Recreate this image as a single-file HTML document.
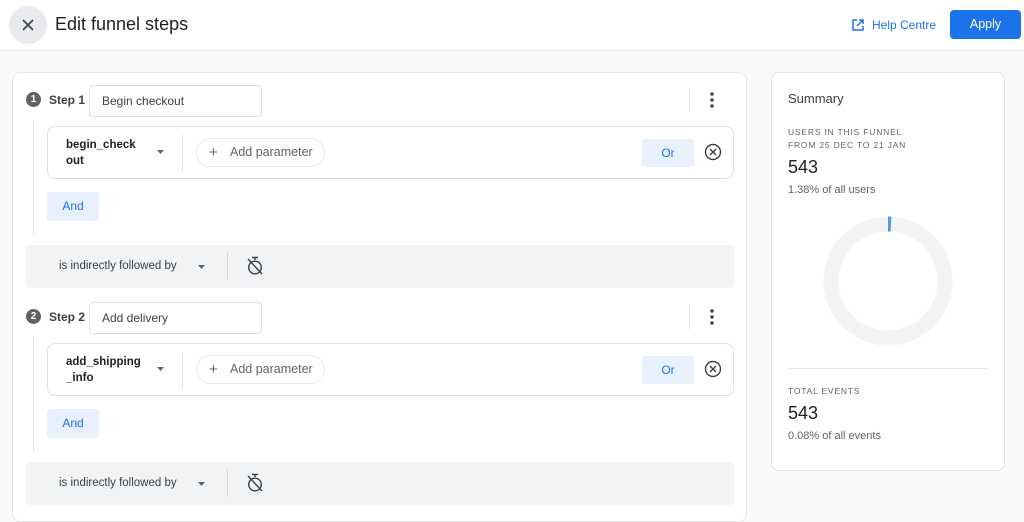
<!DOCTYPE html>
<html><head><meta charset="utf-8"><style>
*{box-sizing:border-box;margin:0;padding:0}
body{width:1024px;height:509px;overflow:hidden;background:#f8f9fa;font-family:"Liberation Sans",sans-serif;color:#202124;position:relative}
.a{position:absolute}
.hdr{left:0;top:0;width:1024px;height:51px;background:#fff;border-bottom:1px solid #e8eaed}
.card{background:#fff;border:1px solid #e3e3e3;border-radius:8px}
.t{position:absolute;white-space:nowrap}
.inp{background:#fff;border:1px solid #e0e0e0;border-radius:4px;font-size:12px;color:#3c4043;padding-left:12px;line-height:30px}
.ev{border:1px solid #e0e0e0;border-radius:8px;background:#fff}
.pill{border:1px solid #e6e6e6;border-radius:15px;font-size:12.5px;color:#5f6368}
.btn{background:#e8f0fe;color:#1a73e8;font-size:12px;text-align:center;border-radius:3px}
.band{background:#f1f3f4;border-radius:4px}
.lbl{font-size:8.5px;letter-spacing:.8px;color:#5f6368}
</style></head><body>
<div class="a hdr"></div>
<div class="a" style="left:9px;top:6px;width:38px;height:38px;border-radius:50%;background:#e8eaed"></div>
<svg class="a" style="left:21px;top:18px" width="14" height="14"><path d="M2 2L12 12M12 2L2 12" stroke="#3c4043" stroke-width="1.6"/></svg>
<div class="t" style="left:55px;top:14px;font-size:18px;color:#202124">Edit funnel steps</div>
<svg class="a" style="left:851px;top:18px" width="14" height="14" viewBox="0 0 14 14"><path d="M6 2H2V12H12V8M8 2H12V6M12 2L6 8" fill="none" stroke="#1a73e8" stroke-width="1.5"/></svg>
<div class="t" style="left:872px;top:18px;font-size:12px;color:#1a73e8">Help Centre</div>
<div class="a" style="left:950px;top:10px;width:71px;height:29px;background:#1a73e8;border-radius:4px;color:#fff;font-size:12.5px;text-align:center;line-height:29px">Apply</div>

<div class="a card" style="left:12px;top:72px;width:735px;height:450px"></div>
<div class="a card" style="left:771px;top:72px;width:234px;height:399px"></div>

<!-- step blocks -->
<div id="s1">
</div>

<div class="t" style="left:788px;top:91px;font-size:13px;color:#3c4043">Summary</div>
<div class="t lbl" style="left:788px;top:127px">USERS IN THIS FUNNEL</div>
<div class="t lbl" style="left:788px;top:140px">FROM 25 DEC TO 21 JAN</div>
<div class="t" style="left:788px;top:157px;font-size:18px">543</div>
<div class="t" style="left:788px;top:184px;font-size:11px;color:#5f6368">1.38% of all users</div>
<svg class="a" style="left:821px;top:215px" width="134" height="134"><circle cx="67" cy="66" r="57" fill="none" stroke="#f1f3f4" stroke-width="15"/><path d="M67 9 A57 57 0 0 1 70 9.1" fill="none" stroke="#5a95db" stroke-width="15"/></svg>
<div class="a" style="left:788px;top:368px;width:200px;height:1px;background:#e3e3e3"></div>
<div class="t lbl" style="left:788px;top:386px">TOTAL EVENTS</div>
<div class="t" style="left:788px;top:403px;font-size:18px">543</div>
<div class="t" style="left:788px;top:430px;font-size:11px;color:#5f6368">0.08% of all events</div>

<!-- Step 1 -->
<div class="a" style="left:26px;top:92px;width:15px;height:15px;border-radius:50%;background:#5f6368;color:#fff;font-size:10px;text-align:center;line-height:15px;font-weight:bold">1</div>
<div class="t" style="left:49px;top:93px;font-size:12px;font-weight:bold;color:#3c4043">Step 1</div>
<div class="a inp" style="left:89px;top:85px;width:173px;height:32px">Begin checkout</div>
<div class="a" style="left:689px;top:88px;width:1px;height:24px;background:#e0e0e0"></div>
<svg class="a" style="left:709px;top:92px" width="6" height="16"><circle cx="3" cy="2" r="1.7" fill="#3c4043"/><circle cx="3" cy="8" r="1.7" fill="#3c4043"/><circle cx="3" cy="14" r="1.7" fill="#3c4043"/></svg>
<div class="a" style="left:33px;top:121px;width:1px;height:114px;background:#e0e0e0"></div>
<div class="a ev" style="left:47px;top:126px;width:687px;height:53px"></div>
<div class="t" style="left:66px;top:137px;font-size:11.5px;font-weight:bold;line-height:16px;color:#202124">begin_check<br>out</div>
<svg class="a" style="left:157px;top:150px" width="8" height="5"><path d="M0 0H7L3.5 4Z" fill="#5f6368"/></svg>
<div class="a" style="left:182px;top:135px;width:1px;height:37px;background:#e0e0e0"></div>
<div class="a pill" style="left:196px;top:138px;width:129px;height:29px"></div>
<div class="t" style="left:209px;top:144px;font-size:15px;color:#5f6368">+</div>
<div class="t" style="left:230px;top:145px;font-size:12.5px;color:#5f6368">Add parameter</div>
<div class="a btn" style="left:642px;top:139px;width:52px;height:28px;line-height:28px">Or</div>
<svg class="a" style="left:704px;top:143px" width="18" height="18"><circle cx="9" cy="9" r="7.5" fill="none" stroke="#3c4043" stroke-width="1.4"/><path d="M6 6L12 12M12 6L6 12" stroke="#3c4043" stroke-width="1.4"/></svg>
<div class="a btn" style="left:47px;top:192px;width:52px;height:29px;line-height:29px">And</div>
<div class="a band" style="left:26px;top:245px;width:708px;height:43px"></div>
<div class="t" style="left:59px;top:260px;font-size:11.5px;color:#3c4043">is indirectly followed by</div>
<svg class="a" style="left:198px;top:265px" width="8" height="5"><path d="M0 0H7L3.5 4Z" fill="#5f6368"/></svg>
<div class="a" style="left:227px;top:252px;width:1px;height:28px;background:#d5d5d5"></div>
<svg class="a" style="left:246px;top:256px" width="18" height="20" viewBox="0 0 18 20"><path d="M6 1.5H12M9 1.5V4" stroke="#3c4043" stroke-width="1.4"/><circle cx="9" cy="11.5" r="6.3" fill="none" stroke="#3c4043" stroke-width="1.4"/><path d="M2 3L16 18" stroke="#3c4043" stroke-width="1.4"/></svg>

<!-- Step 2 -->
<div class="a" style="left:26px;top:309px;width:15px;height:15px;border-radius:50%;background:#5f6368;color:#fff;font-size:10px;text-align:center;line-height:15px;font-weight:bold">2</div>
<div class="t" style="left:49px;top:310px;font-size:12px;font-weight:bold;color:#3c4043">Step 2</div>
<div class="a inp" style="left:89px;top:302px;width:173px;height:32px">Add delivery</div>
<div class="a" style="left:689px;top:305px;width:1px;height:24px;background:#e0e0e0"></div>
<svg class="a" style="left:709px;top:309px" width="6" height="16"><circle cx="3" cy="2" r="1.7" fill="#3c4043"/><circle cx="3" cy="8" r="1.7" fill="#3c4043"/><circle cx="3" cy="14" r="1.7" fill="#3c4043"/></svg>
<div class="a" style="left:33px;top:338px;width:1px;height:114px;background:#e0e0e0"></div>
<div class="a ev" style="left:47px;top:343px;width:687px;height:53px"></div>
<div class="t" style="left:66px;top:354px;font-size:11.5px;font-weight:bold;line-height:16px;color:#202124">add_shipping<br>_info</div>
<svg class="a" style="left:157px;top:367px" width="8" height="5"><path d="M0 0H7L3.5 4Z" fill="#5f6368"/></svg>
<div class="a" style="left:182px;top:352px;width:1px;height:37px;background:#e0e0e0"></div>
<div class="a pill" style="left:196px;top:355px;width:129px;height:29px"></div>
<div class="t" style="left:209px;top:361px;font-size:15px;color:#5f6368">+</div>
<div class="t" style="left:230px;top:362px;font-size:12.5px;color:#5f6368">Add parameter</div>
<div class="a btn" style="left:642px;top:356px;width:52px;height:28px;line-height:28px">Or</div>
<svg class="a" style="left:704px;top:360px" width="18" height="18"><circle cx="9" cy="9" r="7.5" fill="none" stroke="#3c4043" stroke-width="1.4"/><path d="M6 6L12 12M12 6L6 12" stroke="#3c4043" stroke-width="1.4"/></svg>
<div class="a btn" style="left:47px;top:409px;width:52px;height:29px;line-height:29px">And</div>
<div class="a band" style="left:26px;top:462px;width:708px;height:43px"></div>
<div class="t" style="left:59px;top:477px;font-size:11.5px;color:#3c4043">is indirectly followed by</div>
<svg class="a" style="left:198px;top:482px" width="8" height="5"><path d="M0 0H7L3.5 4Z" fill="#5f6368"/></svg>
<div class="a" style="left:227px;top:469px;width:1px;height:28px;background:#d5d5d5"></div>
<svg class="a" style="left:246px;top:473px" width="18" height="20" viewBox="0 0 18 20"><path d="M6 1.5H12M9 1.5V4" stroke="#3c4043" stroke-width="1.4"/><circle cx="9" cy="11.5" r="6.3" fill="none" stroke="#3c4043" stroke-width="1.4"/><path d="M2 3L16 18" stroke="#3c4043" stroke-width="1.4"/></svg>
</body></html>
